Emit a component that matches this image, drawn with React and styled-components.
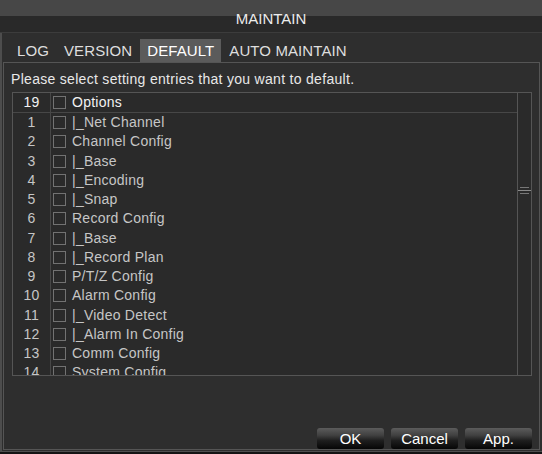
import React from "react";
import styled, { createGlobalStyle } from "styled-components";

const GlobalStyle = createGlobalStyle`
  html, body { margin: 0; padding: 0; background: #141414; }
  body { font-family: "Liberation Sans", Arial, sans-serif; }
  * { box-sizing: border-box; }
`;

const Window = styled.div`
  width: 542px;
  height: 454px;
  display: flex;
  flex-direction: column;
  background: #141414;
  overflow: hidden;
`;

const TitleBar = styled.div`
  height: 33px;
  flex-shrink: 0;
  background: linear-gradient(
    to bottom,
    #474747 0,
    #474747 16px,
    #292929 16px,
    #292929 32px
  );
  border-bottom: 1px solid #3c3c3c;
  color: #ececec;
  font-size: 15px;
  text-align: center;
  padding-top: 5px;
  line-height: 27px;
`;

const Body = styled.div`
  height: 419px;
  flex-shrink: 0;
  display: flex;
  flex-direction: column;
  background: #2e2e2e;
  border-left: 2px solid #4d4d4d;
  border-bottom: 1px solid #505050;
  padding: 0 2px 1px 1px;
`;

const TabBar = styled.div`
  height: 29px;
  display: flex;
  gap: 1px;
  padding: 6px 0 0 7px;
`;

const Tab = styled.div`
  height: 23px;
  padding: 0 7px;
  line-height: 23px;
  font-size: 15px;
  letter-spacing: 0.1px;
  color: ${(p) => (p.$active ? "#ffffff" : "#dedede")};
  background: ${(p) => (p.$active ? "#5b5b5b" : "transparent")};
  white-space: nowrap;
`;

const Panel = styled.div`
  height: 388px;
  border: 1px solid #555555;
  display: flex;
  flex-direction: column;
  padding: 0 7px 0 7px;
`;

const Prompt = styled.div`
  margin-top: 8px;
  font-size: 14px;
  letter-spacing: 0.3px;
  line-height: 16px;
  color: #e8e8e8;
  white-space: nowrap;
`;

const List = styled.div`
  margin: 5px 0 0 1px;
  width: 520px;
  height: 284px;
  border: 1px solid #555555;
  display: flex;
  background: #2a2a2a;
`;

const Table = styled.div`
  flex: 1;
  display: flex;
  flex-direction: column;
  overflow: hidden;
`;

const Row = styled.div`
  flex-shrink: 0;
  display: flex;
  align-items: center;
  height: ${(p) => (p.$header ? "20px" : "19.25px")};
  border-bottom: ${(p) => (p.$header ? "1px solid #474747" : "none")};
  font-size: 14px;
  letter-spacing: 0.25px;
  line-height: 19px;
  color: ${(p) => (p.$header ? "#f2f2f2" : "#c6c6c6")};
  white-space: nowrap;
`;

const NumCell = styled.div`
  width: 38px;
  align-self: stretch;
  display: flex;
  align-items: center;
  justify-content: center;
  border-right: 1px solid #474747;
`;

const Check = styled.div`
  width: 13px;
  height: 13px;
  margin-left: 2px;
  border: 1px solid #727272;
  flex-shrink: 0;
`;

const Label = styled.span`
  margin-left: 6px;
`;

const ScrollBar = styled.div`
  width: 14px;
  border-left: 1px solid #555555;
  background: #2a2a2a;
  display: flex;
  flex-direction: column;
  align-items: center;
  padding-top: 94px;
`;

const GripLine = styled.div`
  height: 1px;
  width: ${(p) => (p.$full ? "100%" : "9px")};
  background: ${(p) => (p.$full ? "#8a8a8a" : "#777777")};
  margin-bottom: 2px;
`;

const ButtonRow = styled.div`
  margin-top: auto;
  display: flex;
  justify-content: flex-end;
  gap: 7px;
`;

const Button = styled.button`
  width: 67px;
  height: 21px;
  padding: 0;
  border: none;
  border-radius: 3px;
  background: linear-gradient(
    to bottom,
    #5c5c5c 0%,
    #404040 35%,
    #1e1e1e 60%,
    #060606 100%
  );
  color: #ffffff;
  font-family: inherit;
  font-size: 15px;
  line-height: 21px;
`;

const tabs = ["LOG", "VERSION", "DEFAULT", "AUTO MAINTAIN"];

const items = [
  "|_Net Channel",
  "Channel Config",
  "|_Base",
  "|_Encoding",
  "|_Snap",
  "Record Config",
  "|_Base",
  "|_Record Plan",
  "P/T/Z Config",
  "Alarm Config",
  "|_Video Detect",
  "|_Alarm In Config",
  "Comm Config",
  "System Config",
];

export default function App() {
  return (
    <>
      <GlobalStyle />
      <Window>
        <TitleBar>MAINTAIN</TitleBar>
        <Body>
          <TabBar>
            {tabs.map((t) => (
              <Tab key={t} $active={t === "DEFAULT"}>
                {t}
              </Tab>
            ))}
          </TabBar>
          <Panel>
            <Prompt>Please select setting entries that you want to default.</Prompt>
            <List>
              <Table>
                <Row $header>
                  <NumCell>19</NumCell>
                  <Check />
                  <Label>Options</Label>
                </Row>
                {items.map((it, i) => (
                  <Row key={i}>
                    <NumCell>{i + 1}</NumCell>
                    <Check />
                    <Label>{it}</Label>
                  </Row>
                ))}
              </Table>
              <ScrollBar>
                <GripLine />
                <GripLine $full />
                <GripLine />
              </ScrollBar>
            </List>
            <ButtonRow>
              <Button>OK</Button>
              <Button>Cancel</Button>
              <Button>App.</Button>
            </ButtonRow>
          </Panel>
        </Body>
      </Window>
    </>
  );
}
